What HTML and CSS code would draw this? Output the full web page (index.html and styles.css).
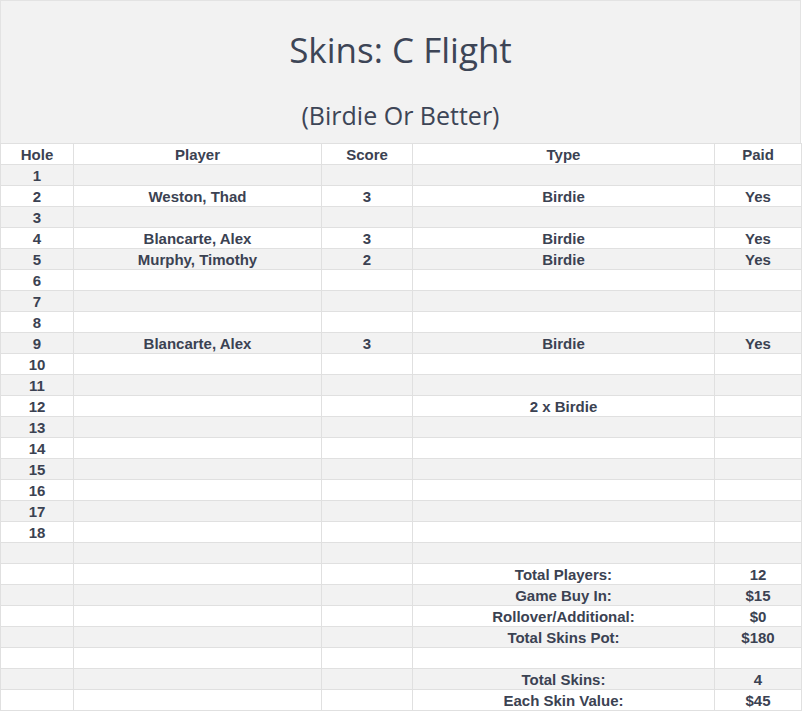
FILE: index.html
```html
<!DOCTYPE html>
<html lang="en">
<head>
<meta charset="utf-8">
<title>Skins: C Flight</title>
<link rel="stylesheet" href="styles.css">
</head>
<body>
<div class="sheet">
  <header class="title-block">
    <h1 class="title">Skins: C Flight</h1>
    <p class="subtitle">(Birdie Or Better)</p>
  </header>
  <table class="skins">
    <colgroup>
      <col class="c-hole"><col class="c-player"><col class="c-score"><col class="c-type"><col class="c-paid">
    </colgroup>
    <thead>
      <tr><th>Hole</th><th>Player</th><th>Score</th><th>Type</th><th>Paid</th></tr>
    </thead>
    <tbody>
      <tr><td>1</td><td></td><td></td><td></td><td></td></tr>
      <tr><td>2</td><td>Weston, Thad</td><td>3</td><td>Birdie</td><td>Yes</td></tr>
      <tr><td>3</td><td></td><td></td><td></td><td></td></tr>
      <tr><td>4</td><td>Blancarte, Alex</td><td>3</td><td>Birdie</td><td>Yes</td></tr>
      <tr><td>5</td><td>Murphy, Timothy</td><td>2</td><td>Birdie</td><td>Yes</td></tr>
      <tr><td>6</td><td></td><td></td><td></td><td></td></tr>
      <tr><td>7</td><td></td><td></td><td></td><td></td></tr>
      <tr><td>8</td><td></td><td></td><td></td><td></td></tr>
      <tr><td>9</td><td>Blancarte, Alex</td><td>3</td><td>Birdie</td><td>Yes</td></tr>
      <tr><td>10</td><td></td><td></td><td></td><td></td></tr>
      <tr><td>11</td><td></td><td></td><td></td><td></td></tr>
      <tr><td>12</td><td></td><td></td><td>2 x Birdie</td><td></td></tr>
      <tr><td>13</td><td></td><td></td><td></td><td></td></tr>
      <tr><td>14</td><td></td><td></td><td></td><td></td></tr>
      <tr><td>15</td><td></td><td></td><td></td><td></td></tr>
      <tr><td>16</td><td></td><td></td><td></td><td></td></tr>
      <tr><td>17</td><td></td><td></td><td></td><td></td></tr>
      <tr><td>18</td><td></td><td></td><td></td><td></td></tr>
      <tr><td></td><td></td><td></td><td></td><td></td></tr>
      <tr><td></td><td></td><td></td><td>Total Players:</td><td>12</td></tr>
      <tr><td></td><td></td><td></td><td>Game Buy In:</td><td>$15</td></tr>
      <tr><td></td><td></td><td></td><td>Rollover/Additional:</td><td>$0</td></tr>
      <tr><td></td><td></td><td></td><td>Total Skins Pot:</td><td>$180</td></tr>
      <tr><td></td><td></td><td></td><td></td><td></td></tr>
      <tr><td></td><td></td><td></td><td>Total Skins:</td><td>4</td></tr>
      <tr><td></td><td></td><td></td><td>Each Skin Value:</td><td>$45</td></tr>
    </tbody>
  </table>
</div>
</body>
</html>
```
FILE: styles.css
```css
html, body {
  margin: 0;
  padding: 0;
  background: #ffffff;
}

.sheet {
  width: 801px;
  color: #3b4252;
}

.title-block {
  box-sizing: border-box;
  height: 143px;
  background: #f2f2f2;
  border: 1px solid #e3e3e3;
  border-bottom: none;
  padding-top: 27px;
  text-align: center;
  font-family: "Open Sans", "Noto Sans", sans-serif;
  color: #3d4556;
}

.title {
  margin: 0;
  font-size: 35px;
  font-weight: 400;
  line-height: 44px;
}

.subtitle {
  margin: 27px 0 0;
  font-size: 25px;
  line-height: 32px;
}

.skins {
  width: 801px;
  table-layout: fixed;
  border-collapse: collapse;
  font-family: "Liberation Sans", Arial, sans-serif;
  font-size: 15px;
  font-weight: 700;
  text-align: center;
}

.c-hole { width: 73px; }
.c-player { width: 248px; }
.c-score { width: 91px; }
.c-type { width: 302px; }
.c-paid { width: 87px; }

.skins th,
.skins td {
  height: 18px;
  padding: 2px 0 0;
  line-height: 18px;
  border: 1px solid #e0e0e0;
  font-weight: 700;
  white-space: nowrap;
}

.skins thead tr {
  background: #ffffff;
}

.skins tbody tr:nth-child(odd) {
  background: #f2f2f2;
}

.skins tbody tr:nth-child(even) {
  background: #ffffff;
}
```
